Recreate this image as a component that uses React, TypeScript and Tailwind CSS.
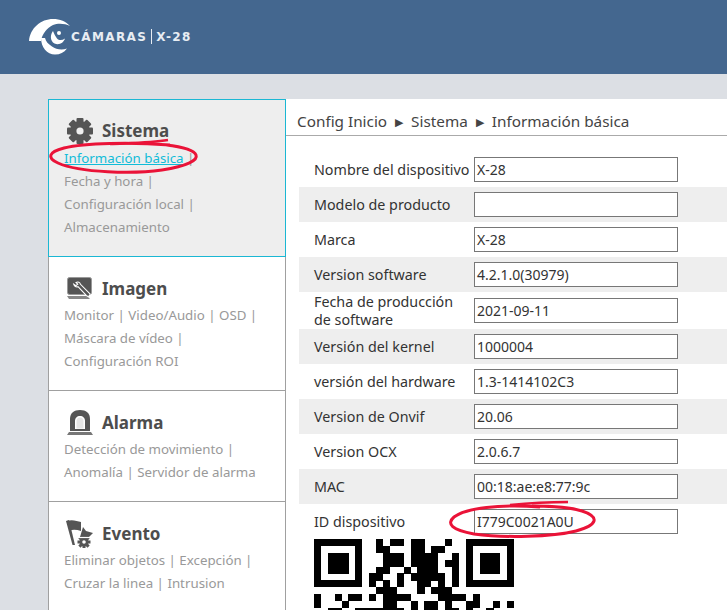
const font = { fontFamily: '"Noto Sans", "Open Sans", sans-serif' };

const menu = [
  {
    title: "Sistema",
    icon: "gear",
    lines: ["Fecha y hora |", "Configuración local |", "Almacenamiento"],
    active: true,
  },
  {
    title: "Imagen",
    icon: "monitor",
    lines: ["Monitor | Video/Audio | OSD |", "Máscara de vídeo |", "Configuración ROI"],
  },
  {
    title: "Alarma",
    icon: "alarm",
    lines: ["Detección de movimiento |", "Anomalía | Servidor de alarma"],
  },
  {
    title: "Evento",
    icon: "flag",
    lines: ["Eliminar objetos | Excepción |", "Cruzar la linea | Intrusion"],
  },
];

const rows = [
  { label: "Nombre del dispositivo", value: "X-28" },
  { label: "Modelo de producto", value: "" },
  { label: "Marca", value: "X-28" },
  { label: "Version software", value: "4.2.1.0(30979)" },
  { label: "Fecha de producción de software", value: "2021-09-11", tall: true },
  { label: "Versión del kernel", value: "1000004" },
  { label: "versión del hardware", value: "1.3-1414102C3" },
  { label: "Version de Onvif", value: "20.06" },
  { label: "Version OCX", value: "2.0.6.7" },
  { label: "MAC", value: "00:18:ae:e8:77:9c" },
  { label: "ID dispositivo", value: "I779C0021A0U" },
];

// top of the QR code: finder rows around the middle columns, then full rows
const finder = ["1111111", "1000001", "1011101", "1011101", "1011101", "1000001", "1111111"];
const middle = [
  "001011011000100",
  "001100011011000",
  "000111011110010",
  "000111011110110",
  "001100101110010",
  "011001011111010",
  "010101001101010",
];
const qr = [
  ...middle.map((mid, i) => finder[i] + mid + finder[i]),
  "00000000011100010111000000000",
  "10010110101111000011110100000",
  "10001000001100101101001100101",
  "00110011111110101101101001000",
];

function MenuIcon({ name, bg }: { name: string; bg: string }) {
  if (name === "gear") {
    return (
      <svg width="28" height="28" viewBox="0 0 28 28" className="shrink-0">
        {[0, 45, 90, 135].map((a) => (
          <rect key={a} x="10.5" y="1" width="7" height="26" rx="1" fill="#555" transform={`rotate(${a} 14 14)`} />
        ))}
        <circle cx="14" cy="14" r="10" fill="#555" />
        <circle cx="14" cy="14" r="3.6" fill={bg} />
      </svg>
    );
  }
  if (name === "monitor") {
    return (
      <svg width="28" height="28" viewBox="0 0 28 28" className="shrink-0">
        <rect x="1.5" y="2.5" width="24" height="17" rx="2" fill="#555" stroke="#999" strokeWidth="1" />
        <path d="M1 21h20l3 3H3z" fill="#888" />
        <path
          d="M10 7.5c2-1 4-.2 4.500 1.800l9 9c1 1 .5 2-.5 2.700-1 .6-1.800.4-2.500-.3l-8.500-9c-2 .6-3.800-.4-4.300-2.500l2.300 1.500 1.800-1.400z"
          fill="#555"
          stroke="#fff"
          strokeWidth="1.100"
        />
      </svg>
    );
  }
  if (name === "alarm") {
    return (
      <svg width="28" height="28" viewBox="0 0 28 28" className="shrink-0">
        <path d="M4 22V10C4 4 8 1 14 1s10 3 10 9v12z" fill="#555" />
        <path d="M9 20v-8c0-3 2-5 5-5s5 2 5 5v8z" fill="#fff" />
        <path d="M10.500 19.500v-7.500c0-2.200 1.300-3.600 3.500-3.600s3.500 1.400 3.500 3.600v7.500z" fill="#555" fillOpacity="0.15" />
        <path d="M3 23h22l2 3H1z" fill="#777" />
      </svg>
    );
  }
  return (
    <svg width="28" height="28" viewBox="0 0 28 28" className="shrink-0">
      <path d="M0 1l3-1 6 25H6.500z" fill="#555" />
      <path d="M1 1c5-2 10 0 14 1v9c-4-1-8-2-11.500 0z" fill="#555" />
      <path d="M17 7l3 4 7 2-4 4H14z" fill="#555" />
      <circle cx="18" cy="22" r="4.500" fill="#555" />
      {[0, 45, 90, 135].map((a) => (
        <rect key={a} x="16.500" y="15.500" width="3" height="13" fill="#555" transform={`rotate(${a} 18 22)`} />
      ))}
      <path d="M11 17.500h16" stroke={bg} strokeWidth="1.200" />
      <circle cx="18" cy="22" r="1.800" fill={bg} />
    </svg>
  );
}

function Logo() {
  const logoFont = { fontFamily: '"DejaVu Sans", sans-serif' };
  return (
    <div className="flex items-center">
      <svg width="42" height="36" viewBox="29 19 42 36" className="shrink-0">
        <path d="M29 41C30 28 41 19 53 19c7 0 13 2.500 17 7-5-2.500-12-3-17-1-6 3-11 9-12 16z" fill="#fff" />
        <path d="M41 38c0 9 6 16.500 14 16.500 5 0 9-2 12-6-5 2-11 1-15-2-4-2.500-6-5-7-8.500z" fill="#fff" />
        <path d="M53 31c-3 4-3 10 1.500 12.500 4.500 2 9-.5 10.500-5-3 2-6 2-8 0-1.500-2-3-5-4-7.500z" fill="#fff" />
        <circle cx="59" cy="33" r="2" fill="#fff" />
      </svg>
      <span className="text-[12px] leading-none font-bold tracking-[1.400px] text-[#e8edf3]" style={logoFont}>
        CÁMARAS
      </span>
      <span className="mx-[4px] h-[15px] w-px bg-[#e8edf3]" />
      <span className="text-[12px] leading-none font-bold tracking-[1.400px] text-[#e8edf3]" style={logoFont}>
        X-28
      </span>
    </div>
  );
}

function Sidebar() {
  return (
    <div className="w-[238px] shrink-0 border-x border-[#a0a0a0]">
      {menu.map((m) => (
        <div
          key={m.title}
          className={
            m.active
              ? "-mx-px border border-[#1bb7d3] bg-[#eeeeee] px-[15px] pt-[16px] pb-[17px]"
              : "border-b border-[#a0a0a0] bg-white px-[15px] pt-[17px] pb-[17px]"
          }
        >
          <div className="flex h-[30px] items-center gap-[8px] pl-[2px]">
            <MenuIcon name={m.icon} bg={m.active ? "#eeeeee" : "#ffffff"} />
            <span className="text-[17px] font-bold text-[#4d4d4d]">{m.title}</span>
          </div>
          {m.active && (
            <div className="mt-[1px] h-[23px] text-[13.300px] leading-[23px] text-[#999]">
              <span className="text-[#10bcd8] underline">Información básica</span> |
            </div>
          )}
          {m.lines.map((l) => (
            <div key={l} className="h-[23px] text-[13.300px] leading-[23px] whitespace-nowrap text-[#999]">
              {l}
            </div>
          ))}
        </div>
      ))}
    </div>
  );
}

function InfoRow({ label, value, tall, shaded }: { label: string; value: string; tall?: boolean; shaded: boolean }) {
  return (
    <div className={`flex items-center ${tall ? "h-[37px]" : "h-[35px]"} ${shaded ? "bg-[#eeeeee]" : "bg-white"}`}>
      <div className={`w-[175px] shrink-0 pl-[15px] text-[14.300px] text-[#333] ${tall ? "pr-[10px] leading-[18px]" : "whitespace-nowrap"}`}>
        {label}
      </div>
      <div className="h-[25px] w-[204px] shrink-0 border border-[#777] bg-white pl-[2px] text-[14px] leading-[23px] text-[#333]">
        {value}
      </div>
    </div>
  );
}

function QrCode() {
  const m = 200 / 29;
  return (
    <svg width="200" height="71" viewBox="0 0 200 71" className="ml-[15px] block" shapeRendering="crispEdges">
      {qr.map((row, y) =>
        row.split("").map((c, x) =>
          c === "1" ? <rect key={`${x}-${y}`} x={x * m} y={y * m} width={m + 0.2} height={m + 0.2} fill="#000" /> : null
        )
      )}
    </svg>
  );
}

function Marks() {
  return (
    <svg className="pointer-events-none absolute inset-0" width="727" height="610" viewBox="0 0 727 610" fill="none">
      <path
        d="M170 145c-40-3-85-2-106 3-16 4-17 10-6 15 22 10 76 11 104 7 26-4 36-10 34-15-2-5-12-8-30-10"
        stroke="#ea1338"
        strokeWidth="3"
      />
      <path d="M110 144c20-1 40-1 58-4" stroke="#ea1338" strokeWidth="2.500" />
      <path
        d="M540 507c-40-3-74 1-86 10-8 7-2 13 20 17 30 4 78 3 102-3 22-6 24-14 6-20-12-4-34-5-50-5"
        stroke="#ea1338"
        strokeWidth="3"
      />
      <path d="M510 505c20-2 40-3 58-3" stroke="#ea1338" strokeWidth="2.500" />
    </svg>
  );
}

export default function App() {
  return (
    <div className="relative h-[610px] w-[727px] overflow-hidden bg-[#dcdfe4]" style={font}>
      <div className="flex h-[74px] items-center bg-[#44678f] pb-[1px] pl-[29px]">
        <Logo />
      </div>
      <div className="ml-[48px] mt-[25px] flex h-[511px]">
        <Sidebar />
        <div className="flex-1 bg-white">
          <div className="flex h-[37px] items-end gap-[8px] border-b border-[#aaa] pb-[2px] pl-[11px] text-[15.300px] text-[#444]">
            <span>Config Inicio</span>
            <span className="mb-[3px] text-[11px]">▶</span>
            <span>Sistema</span>
            <span className="mb-[3px] text-[11px]">▶</span>
            <span>Información básica</span>
          </div>
          <div className="ml-[13px] mt-[16px]">
            {rows.map((r, i) => (
              <InfoRow key={r.label} label={r.label} value={r.value} tall={r.tall} shaded={i % 2 === 1} />
            ))}
            <QrCode />
          </div>
        </div>
      </div>
      <Marks />
    </div>
  );
}
